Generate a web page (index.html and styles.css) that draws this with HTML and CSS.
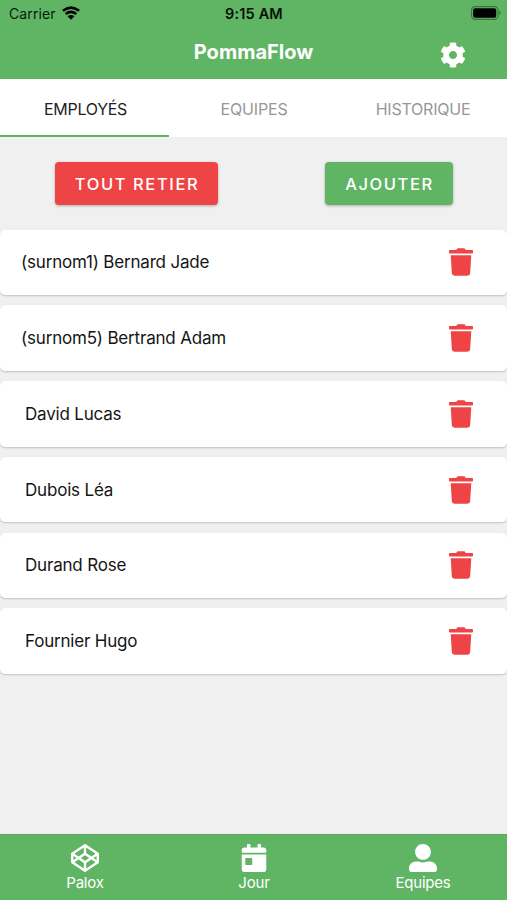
FILE: index.html
```html
<!DOCTYPE html>
<html lang="fr">
<head>
<meta charset="utf-8">
<title>PommaFlow</title>
<link rel="stylesheet" href="styles.css">
</head>
<body>
<svg class="defs" aria-hidden="true">
  <symbol id="trash" viewBox="0 0 448 512"><path d="M432 32H312l-9.4-18.7A24 24 0 0 0 281.1 0H166.8a23.72 23.72 0 0 0-21.4 13.3L136 32H16A16 16 0 0 0 0 48v32a16 16 0 0 0 16 16h416a16 16 0 0 0 16-16V48a16 16 0 0 0-16-16zM53.2 467a48 48 0 0 0 47.9 45h245.8a48 48 0 0 0 47.9-45L416 128H32z"/></symbol>
</svg>
<div class="app">
  <header class="header">
    <div class="status">
      <div class="carrier"><span>Carrier</span>
        <svg class="wifi" viewBox="0 0 18 14"><path d="M.9 4.8Q9-1.700 17.100 4.800M3.700 8Q9 3.700 14.300 8" fill="none" stroke="#000" stroke-width="2.600"/><path d="M5.600 10.300Q9 7.500 12.400 10.300L9 13.700Z"/></svg>
      </div>
      <span class="clock">9:15 AM</span>
      <svg class="battery" viewBox="0 0 30 14"><rect x=".6" y=".6" width="26.4" height="12.8" rx="3.6" fill="none" stroke="#387340" stroke-width="1.1"/><rect x="2.2" y="2.2" width="23" height="9.6" rx="1.8"/><path d="M28.2 4.8q3 2.2 0 4.4z" fill="#387340"/></svg>
    </div>
    <div class="titlebar">
      <h1 class="title">PommaFlow</h1>
      <svg class="gear" viewBox="0 0 512 512"><path d="M487.4 315.7l-42.6-24.6c4.3-23.2 4.3-47 0-70.2l42.6-24.6c4.9-2.8 7.1-8.6 5.5-14-11.1-35.6-30-67.8-54.7-94.6-3.8-4.1-10-5.1-14.8-2.3L380.8 110c-17.9-15.4-38.5-27.3-60.8-35.1V25.8c0-5.6-3.9-10.5-9.4-11.7-36.7-8.2-74.3-7.8-109.2 0-5.5 1.2-9.4 6.1-9.4 11.7V75c-22.2 7.9-42.8 19.8-60.8 35.1L88.7 85.5c-4.9-2.8-11-1.9-14.8 2.3-24.7 26.7-43.6 58.9-54.7 94.6-1.7 5.4.6 11.2 5.5 14L67.3 221c-4.3 23.2-4.3 47 0 70.2l-42.6 24.6c-4.9 2.8-7.1 8.6-5.5 14 11.1 35.6 30 67.8 54.7 94.6 3.8 4.1 10 5.1 14.8 2.3l42.6-24.6c17.9 15.4 38.5 27.3 60.8 35.1v49.2c0 5.6 3.9 10.5 9.4 11.7 36.7 8.2 74.3 7.8 109.2 0 5.5-1.2 9.4-6.1 9.4-11.7v-49.2c22.2-7.9 42.8-19.8 60.8-35.1l42.6 24.6c4.9 2.8 11 1.9 14.8-2.3 24.7-26.7 43.6-58.9 54.7-94.6 1.5-5.5-.7-11.3-5.6-14.1zM256 336c-44.1 0-80-35.9-80-80s35.9-80 80-80 80 35.9 80 80-35.9 80-80 80z"/></svg>
    </div>
  </header>
  <nav class="tabs">
    <a class="tab active">EMPLOYÉS</a>
    <a class="tab">EQUIPES</a>
    <a class="tab history">HISTORIQUE</a>
  </nav>
  <main class="content">
    <div class="actions">
      <button class="btn remove">TOUT RETIER</button>
      <button class="btn add">AJOUTER</button>
    </div>
    <ul class="list">
      <li class="card"><span class="name">(surnom1) Bernard Jade</span><svg class="trash"><use href="#trash"/></svg></li>
      <li class="card"><span class="name">(surnom5) Bertrand Adam</span><svg class="trash"><use href="#trash"/></svg></li>
      <li class="card"><span class="name plain">David Lucas</span><svg class="trash"><use href="#trash"/></svg></li>
      <li class="card"><span class="name plain">Dubois Léa</span><svg class="trash"><use href="#trash"/></svg></li>
      <li class="card"><span class="name plain">Durand Rose</span><svg class="trash"><use href="#trash"/></svg></li>
      <li class="card"><span class="name plain">Fournier Hugo</span><svg class="trash"><use href="#trash"/></svg></li>
    </ul>
  </main>
  <footer class="bottom">
    <a class="item"><svg viewBox="0 0 512 512"><path d="M502.285 159.704l-234-156c-7.987-4.915-16.568-4.994-24.571 0l-234 156C3.714 163.703 0 170.847 0 177.989v155.999c0 7.143 3.714 14.286 9.715 18.286l234 156.022c7.987 4.915 16.568 4.994 24.571 0l234-156.022c6-3.999 9.715-11.143 9.715-18.286V177.989c-.001-7.142-3.715-14.286-9.716-18.285zM278 63.131l172.286 114.858-76.857 51.429L278 165.703V63.131zm-44 0v102.572l-95.429 63.715-76.857-51.429L234 63.131zM44 219.132l55.143 36.857L44 292.847v-73.715zm190 229.715L61.714 333.989l76.857-51.429L234 346.275v102.572zm22-140.858l-77.715-52 77.715-52 77.715 52-77.715 52zm22 140.858V346.275l95.429-63.715 76.857 51.429L278 448.847zm190-156l-55.143-36.857L468 219.132v73.715z"/></svg><span>Palox</span></a>
    <a class="item"><svg viewBox="0 0 448 512"><path d="M0 464c0 26.5 21.5 48 48 48h352c26.5 0 48-21.5 48-48V192H0v272zm64-192c0-8.8 7.2-16 16-16h96c8.8 0 16 7.2 16 16v96c0 8.8-7.2 16-16 16H80c-8.8 0-16-7.2-16-16v-96zM400 64h-48V16c0-8.8-7.2-16-16-16h-32c-8.8 0-16 7.2-16 16v48H160V16c0-8.8-7.2-16-16-16h-32c-8.8 0-16 7.2-16 16v48H48C21.5 64 0 85.5 0 112v48h448v-48c0-26.5-21.5-48-48-48z"/></svg><span>Jour</span></a>
    <a class="item"><svg viewBox="0 0 512 512"><path d="M256 288c79.5 0 144-64.5 144-144S335.5 0 256 0 112 64.5 112 144s64.5 144 144 144zm128 32h-55.1c-22.2 10.2-46.9 16-72.9 16s-50.6-5.8-72.9-16H128C57.3 320 0 377.3 0 448v16c0 26.5 21.5 48 48 48h416c26.5 0 48-21.5 48-48v-16c0-70.7-57.3-128-128-128z"/></svg><span>Equipes</span></a>
  </footer>
</div>
</body>
</html>
```
FILE: styles.css
```css
* { box-sizing: border-box; }
body { margin: 0; font-family: Inter, "Liberation Sans", sans-serif; }
.defs { display: none; }
.app { width: 507px; height: 900px; display: flex; flex-direction: column; background: #f0f0f1; overflow: hidden; }
.header { height: 79px; background: #5fb564; flex: none; }
.status { height: 27px; display: grid; grid-template-columns: 1fr auto 1fr; align-items: center; padding: 0 6px 0 9px; font-size: 14px; line-height: 27px; color: #0a180b; }
.carrier { display: flex; align-items: center; gap: 6px; letter-spacing: 0.1px; }
.wifi { width: 18px; height: 14px; margin-top: -2px; }
.clock { font-weight: 600; font-size: 14.5px; letter-spacing: 0.15px; margin-left: -2px; color: #061006; }
.battery { width: 30px; height: 14px; justify-self: end; margin-top: -1px; }
.titlebar { display: grid; grid-template-columns: 1fr auto 1fr; height: 52px; align-items: center; color: #fff; }
.title { grid-column: 2; margin: 0 0 2px; font-size: 20px; line-height: 24px; font-weight: 700; }
.gear { width: 26px; height: 26px; fill: #fff; justify-self: end; margin: 3px 41px 0 0; }
.tabs { height: 58px; flex: none; display: grid; grid-template-columns: repeat(3, 1fr); background: #fff; }
.tab { display: flex; align-items: center; justify-content: center; font-size: 16px; color: #979797; border-bottom: 2px solid transparent; letter-spacing: -0.17px; padding: 3px 0 0 1px; }
.tab.active { color: #222; border-bottom-color: #5fb564; letter-spacing: -0.27px; padding-left: 2px; }
.history { letter-spacing: -0.22px; }
.content { flex: 1; min-height: 0; }
.actions { height: 92.5px; display: flex; justify-content: space-between; padding: 25px 54px 0 55px; }
.btn { height: 43px; border: 0; border-radius: 4px; padding: 0; color: #fff; font-family: inherit; font-size: 16.5px; font-weight: 500; letter-spacing: 1.6px; text-indent: 1px; box-shadow: 0 1px 3px rgba(0,0,0,.28); }
.remove { width: 163px; background: #ee4446; }
.add { width: 128px; background: #5fb564; }
.list { list-style: none; margin: 0; padding: 0; display: flex; flex-direction: column; gap: 10.3px; }
.card { height: 65.5px; display: flex; align-items: center; justify-content: space-between; padding: 0 34px 0 21px; background: #fff; border-radius: 5px; box-shadow: 0 1px 2px rgba(0,0,0,.2); }
.name { font-size: 17px; line-height: 24px; letter-spacing: -0.19px; color: #151515; }
.plain { padding-left: 4px; }
.trash { width: 24px; height: 28px; fill: #ee4446; }
.bottom { height: 66px; flex: none; display: grid; grid-template-columns: repeat(3, 1fr); background: #5fb564; border-top: 1px solid #55a45a; color: #fff; }
.item { display: flex; flex-direction: column; align-items: center; padding: 9px 0 0 1px; font-size: 15px; line-height: 18px; letter-spacing: -0.2px; }
.item svg { height: 28px; width: 28px; fill: #fff; margin-bottom: 2px; }
```
